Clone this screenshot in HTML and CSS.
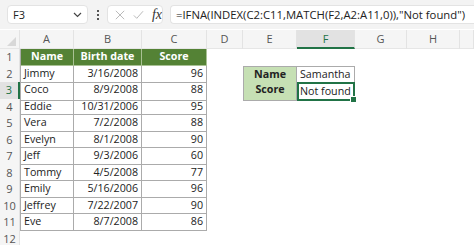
FILE: index.html
```html
<!DOCTYPE html>
<html lang="en">

<head>
    <meta charset="UTF-8">
    <meta name="viewport" content="width=device-width, initial-scale=1.0">
    <title>IFNA INDEX MATCH</title>

    <link rel="stylesheet" href="styles.css">
</head>

<body>
    <div class="formula-bar">
        <div class="name-box">
            <span>F3</span>
            <svg class="chevron" width="9" height="6" viewBox="0 0 9 6">
                <path d="M1 1 L4.5 4.5 L8 1" fill="none" stroke="#444" stroke-width="1.2" />
            </svg>
        </div>
        <div class="dots">
            <i></i><i></i><i></i>
        </div>
        <div class="fx-box">
            <svg width="12" height="12" viewBox="0 0 12 12">
                <path d="M1 1 L11 11 M11 1 L1 11" stroke="#b4b4b4" stroke-width="1.1" />
            </svg>
            <svg width="13" height="12" viewBox="0 0 13 12">
                <path d="M1 6.5 L4.5 10 L12 1.5" fill="none" stroke="#b4b4b4" stroke-width="1.1" />
            </svg>
            <span class="fx">fx</span>
        </div>
        <div class="formula">=IFNA(INDEX(C2:C11,MATCH(F2,A2:A11,0)),"Not found")</div>
    </div>

    <div class="sheet">
        <div class="row head">
            <div class="corner"><span></span></div>
            <div>A</div><div>B</div><div>C</div><div>D</div><div>E</div>
            <div class="sel-col">F</div><div>G</div><div>H</div><div></div>
        </div>

        <div class="row">
            <div class="num">1</div>
            <div class="t th first">Name</div><div class="t th">Birth date</div><div class="t th">Score</div>
            <div></div><div></div><div></div><div></div><div></div><div></div>
        </div>
        <div class="row">
            <div class="num">2</div>
            <div class="t first">Jimmy</div><div class="t r">3/16/2008</div><div class="t r">96</div>
            <div></div><div class="t lk top first">Name</div><div class="t top">Samantha</div><div></div><div></div><div></div>
        </div>
        <div class="row">
            <div class="num sel-row">3</div>
            <div class="t first">Coco</div><div class="t r">8/9/2008</div><div class="t r">88</div>
            <div></div><div class="t lk first">Score</div><div class="t active">Not found</div><div></div><div></div><div></div>
        </div>
        <div class="row">
            <div class="num">4</div>
            <div class="t first">Eddie</div><div class="t r">10/31/2006</div><div class="t r">95</div>
            <div></div><div></div><div></div><div></div><div></div><div></div>
        </div>
        <div class="row">
            <div class="num">5</div>
            <div class="t first">Vera</div><div class="t r">7/2/2008</div><div class="t r">88</div>
            <div></div><div></div><div></div><div></div><div></div><div></div>
        </div>
        <div class="row">
            <div class="num">6</div>
            <div class="t first">Evelyn</div><div class="t r">8/1/2008</div><div class="t r">90</div>
            <div></div><div></div><div></div><div></div><div></div><div></div>
        </div>
        <div class="row">
            <div class="num">7</div>
            <div class="t first">Jeff</div><div class="t r">9/3/2006</div><div class="t r">60</div>
            <div></div><div></div><div></div><div></div><div></div><div></div>
        </div>
        <div class="row">
            <div class="num">8</div>
            <div class="t first">Tommy</div><div class="t r">4/5/2008</div><div class="t r">77</div>
            <div></div><div></div><div></div><div></div><div></div><div></div>
        </div>
        <div class="row">
            <div class="num">9</div>
            <div class="t first">Emily</div><div class="t r">5/16/2006</div><div class="t r">96</div>
            <div></div><div></div><div></div><div></div><div></div><div></div>
        </div>
        <div class="row">
            <div class="num">10</div>
            <div class="t first">Jeffrey</div><div class="t r">7/22/2007</div><div class="t r">90</div>
            <div></div><div></div><div></div><div></div><div></div><div></div>
        </div>
        <div class="row">
            <div class="num">11</div>
            <div class="t first">Eve</div><div class="t r">8/7/2008</div><div class="t r">86</div>
            <div></div><div></div><div></div><div></div><div></div><div></div>
        </div>
        <div class="row">
            <div class="num">12</div>
            <div></div><div></div><div></div><div></div><div></div><div></div><div></div><div></div><div></div>
        </div>
    </div>
</body>

</html>
```

FILE: styles.css
```css
body {
    margin: 0;
    background-color: #fff;
    font-family: "Open Sans", Arial, sans-serif;
    color: #222;
    overflow: hidden;
}

.formula-bar {
    display: flex;
    align-items: center;
    height: 29px;
    padding-left: 7px;
    background-color: #f3f3f3;
}

.name-box {
    display: flex;
    align-items: center;
    justify-content: space-between;
    box-sizing: border-box;
    width: 81px;
    height: 19px;
    padding: 0 5px 0 5px;
    background-color: #fff;
    border: 1px solid #e3e3e3;
    border-radius: 4px;
    font-size: 11px;
}

.dots {
    display: flex;
    flex-direction: column;
    gap: 2px;
    width: 19px;
    align-items: center;
}

.dots i {
    display: block;
    width: 2px;
    height: 2px;
    background-color: #555;
}

.fx-box {
    display: flex;
    align-items: center;
    gap: 8px;
    box-sizing: border-box;
    width: 56px;
    height: 19px;
    padding-left: 7px;
    background-color: #fff;
    border: 1px solid #e3e3e3;
    border-radius: 4px;
}

.fx {
    font-family: "Liberation Serif", serif;
    font-style: italic;
    font-size: 14px;
    color: #333;
}

.formula {
    box-sizing: border-box;
    flex: 1;
    height: 19px;
    margin-left: 7px;
    padding-left: 5px;
    line-height: 17px;
    background-color: #fff;
    border: 1px solid #e3e3e3;
    border-right: none;
    border-radius: 4px 0 0 4px;
    font-size: 11.3px;
    white-space: nowrap;
}

.sheet {
    margin-top: 1px;
    font-size: 10.7px;
}

.row {
    display: grid;
    grid-template-columns: 20px 54px 68px 65px 36px 54px 58px 52px 53px 1fr;
    height: 16.5px;
}

.row > div {
    box-sizing: border-box;
    line-height: 15px;
    white-space: nowrap;
}

.head {
    height: 18px;
    background-color: #f5f5f5;
    color: #555;
    border-bottom: 1px solid #e6e6e6;
    font-size: 11px;
}

.head > div {
    text-align: center;
    line-height: 17px;
    border-right: 1px solid #e3e3e3;
}

.corner {
    position: relative;
}

.corner span {
    position: absolute;
    right: 3px;
    bottom: 3px;
    border-left: 9px solid transparent;
    border-bottom: 9px solid #d8d8d8;
}

.head .sel-col {
    background-color: #e2e2e2;
    color: #217346;
    border-bottom: 2px solid #217346;
}

.num {
    text-align: center;
    color: #555;
    background-color: #f5f5f5;
    border-right: 1px solid #e3e3e3;
    font-size: 11px;
}

.num.sel-row {
    background-color: #e2e2e2;
    color: #217346;
    border-right: 2px solid #217346;
}

.t {
    padding: 0 3px;
    border-right: 1px solid #ababab;
    border-bottom: 1px solid #ababab;
}

.t.first {
    border-left: 1px solid #ababab;
}

.t.top {
    border-top: 1px solid #ababab;
}

.th {
    background-color: #548235;
    color: #fff;
    font-weight: bold;
    text-align: center;
    border-color: #a9c194;
}

.r {
    text-align: right;
}

.lk {
    background-color: #c6e0b4;
    font-weight: bold;
    text-align: center;
}

.active {
    position: relative;
    border: 2px solid #217346;
    line-height: 12px;
    padding-left: 1px;
}

.active::after {
    content: "";
    position: absolute;
    right: -4px;
    bottom: -4px;
    width: 5px;
    height: 5px;
    background-color: #217346;
    border: 1px solid #fff;
}
```
